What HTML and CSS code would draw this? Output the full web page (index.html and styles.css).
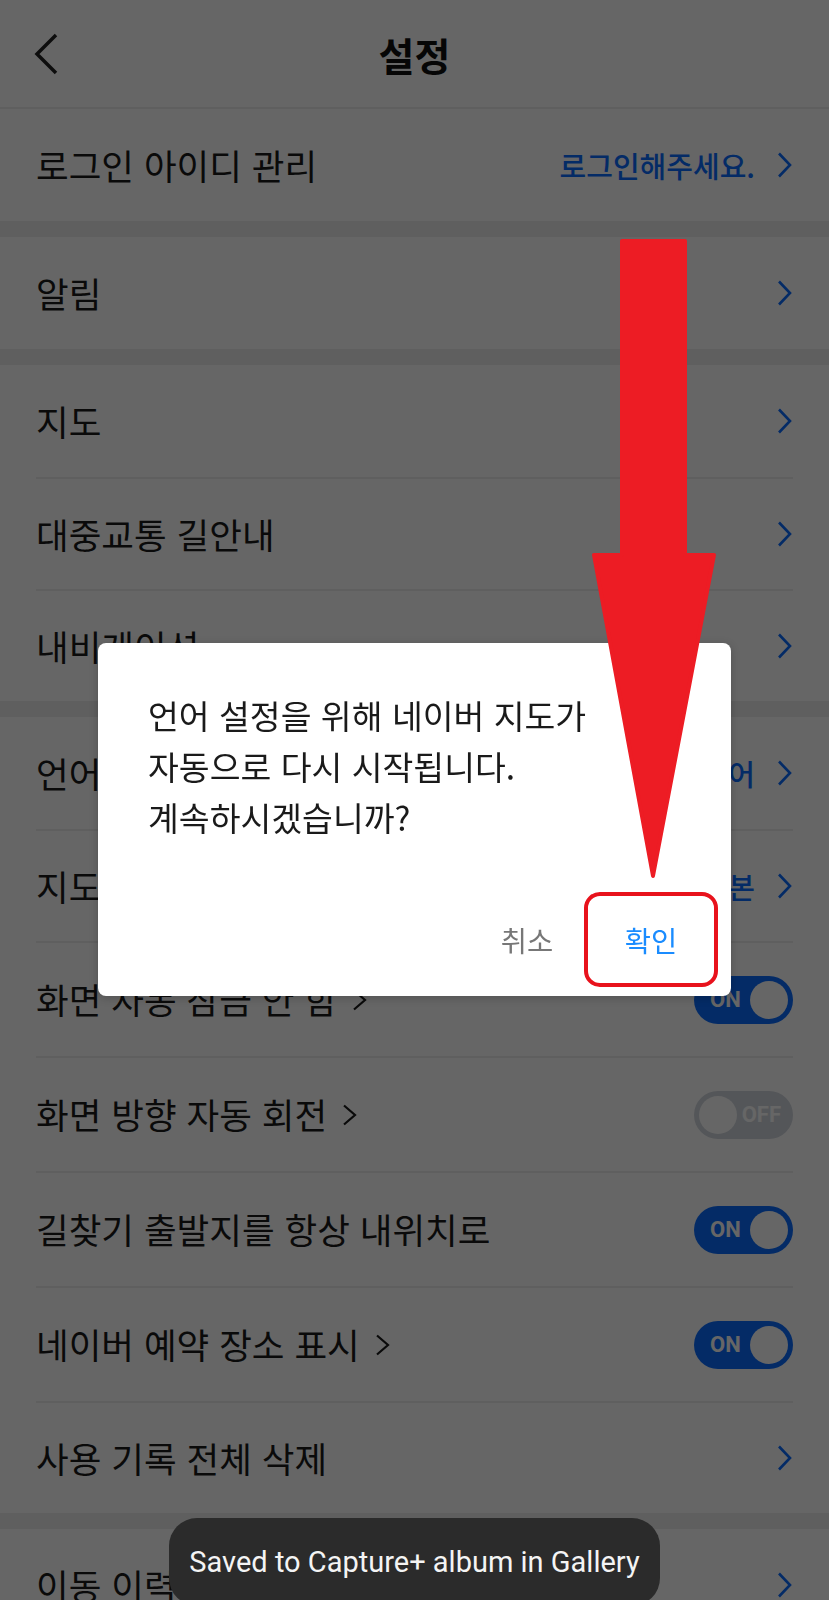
FILE: index.html
```html
<!DOCTYPE html>
<html lang="ko">
<head>
  <meta charset="UTF-8">
  <meta name="viewport" content="width=device-width, initial-scale=1.0">
  <title>설정</title>
<link rel="stylesheet" href="styles.css">
</head>
<body>
<div class="screen">
    <div class="topbar">
        <svg class="back" width="26" height="42" viewBox="0 0 26 42"><path d="M22 2 L3 21 L22 40"/></svg>
        <div class="title">설정</div>
        <div></div>
    </div>

    <div class="group">
        <div class="row">
            <span class="label">로그인 아이디 관리</span>
            <span class="value">로그인해주세요.</span>
            <svg class="chev" width="16" height="26" viewBox="0 0 16 26"><path d="M2 1.5 L13 13 L2 24.5"/></svg>
        </div>
    </div>

    <div class="group">
        <div class="row">
            <span class="label">알림</span>
            <svg class="chev" width="16" height="26" viewBox="0 0 16 26"><path d="M2 1.5 L13 13 L2 24.5"/></svg>
        </div>
    </div>

    <div class="group">
        <div class="row">
            <span class="label">지도</span>
            <svg class="chev" width="16" height="26" viewBox="0 0 16 26"><path d="M2 1.5 L13 13 L2 24.5"/></svg>
        </div>
        <div class="row">
            <span class="label">대중교통 길안내</span>
            <svg class="chev" width="16" height="26" viewBox="0 0 16 26"><path d="M2 1.5 L13 13 L2 24.5"/></svg>
        </div>
        <div class="row">
            <span class="label">내비게이션</span>
            <svg class="chev" width="16" height="26" viewBox="0 0 16 26"><path d="M2 1.5 L13 13 L2 24.5"/></svg>
        </div>
    </div>

    <div class="group">
        <div class="row">
            <span class="label">언어</span>
            <span class="value">한국어</span>
            <svg class="chev" width="16" height="26" viewBox="0 0 16 26"><path d="M2 1.5 L13 13 L2 24.5"/></svg>
        </div>
        <div class="row">
            <span class="label">지도 글자 크기</span>
            <span class="value">기본</span>
            <svg class="chev" width="16" height="26" viewBox="0 0 16 26"><path d="M2 1.5 L13 13 L2 24.5"/></svg>
        </div>
        <div class="row tall">
            <span class="label">화면 자동 잠금 안 함 <svg class="more" width="18" height="22" viewBox="0 0 18 22"><path d="M3 1.5 L14 11 L3 20.5"/></svg></span>
            <div class="toggle on"><span>ON</span><i class="knob"></i></div>
        </div>
        <div class="row tall">
            <span class="label">화면 방향 자동 회전 <svg class="more" width="18" height="22" viewBox="0 0 18 22"><path d="M3 1.5 L14 11 L3 20.5"/></svg></span>
            <div class="toggle off"><i class="knob"></i><span>OFF</span></div>
        </div>
        <div class="row tall">
            <span class="label">길찾기 출발지를 항상 내위치로</span>
            <div class="toggle on"><span>ON</span><i class="knob"></i></div>
        </div>
        <div class="row tall">
            <span class="label">네이버 예약 장소 표시 <svg class="more" width="18" height="22" viewBox="0 0 18 22"><path d="M3 1.5 L14 11 L3 20.5"/></svg></span>
            <div class="toggle on"><span>ON</span><i class="knob"></i></div>
        </div>
        <div class="row">
            <span class="label">사용 기록 전체 삭제</span>
            <svg class="chev" width="16" height="26" viewBox="0 0 16 26"><path d="M2 1.5 L13 13 L2 24.5"/></svg>
        </div>
    </div>

    <div class="group">
        <div class="row">
            <span class="label">이동 이력 관리</span>
            <svg class="chev" width="16" height="26" viewBox="0 0 16 26"><path d="M2 1.5 L13 13 L2 24.5"/></svg>
        </div>
    </div>
</div>

<div class="dim"></div>

<div class="dialog">
    <p class="message">언어 설정을 위해 네이버 지도가<br>자동으로 다시 시작됩니다.<br>계속하시겠습니까?</p>
    <div class="actions">
        <button class="btn cancel">취소</button>
        <button class="btn ok">확인</button>
    </div>
</div>

<!-- annotation arrow -->
<svg class="arrow" width="130" height="645" viewBox="0 0 130 645">
    <path d="M32 3 H95 V317 H124 L63 638 L4 317 H32 Z"/>
</svg>

<div class="toast">Saved to Capture+ album in Gallery</div>
</body></html>
```

FILE: styles.css
```css
html, body {
    margin: 0;
    height: 100%;
    overflow: hidden;
}
body {
    font-family: "Noto Sans CJK KR", sans-serif;
    background-color: #fff;
    color: #1a1a1a;
}
.screen {
    background-color: #eeeeee;
}
.topbar {
    display: grid;
    grid-template-columns: 1fr auto 1fr;
    align-items: center;
    height: 109px;
    box-sizing: border-box;
    padding: 0 34px;
    background-color: #fff;
    border-bottom: 2px solid #eeeeee;
}
.back path {
    fill: none;
    stroke: #222;
    stroke-width: 3.5;
}
.title {
    font-size: 39px;
    font-weight: bold;
    color: #111;
}
.group {
    background-color: #fff;
    padding: 0 36px;
}
.group + .group {
    margin-top: 16px;
}
.row {
    display: flex;
    align-items: center;
    height: 112px;
    box-sizing: border-box;
}
.row.tall {
    height: 115px;
}
.row + .row {
    border-top: 2px solid #eeeeee;
}
.label {
    flex: 1;
    font-size: 35.5px;
    line-height: 1.2;
    display: flex;
    align-items: center;
}
.more {
    margin-left: 14px;
}
.more path {
    fill: none;
    stroke: #1a1a1a;
    stroke-width: 2.2;
}
.value {
    font-size: 29px;
    font-weight: 500;
    color: #0a6cff;
    margin-right: 22px;
}
.chev path {
    fill: none;
    stroke: #0a6cff;
    stroke-width: 2.6;
}
.toggle {
    display: flex;
    align-items: center;
    justify-content: space-between;
    width: 99px;
    height: 48px;
    box-sizing: border-box;
    border-radius: 24px;
    font-family: Roboto, sans-serif;
    font-weight: bold;
    font-size: 22px;
    color: #fff;
}
.toggle.on {
    background-color: #0a6cff;
    padding: 0 5px 0 16px;
}
.toggle.off {
    background-color: #d2d7de;
    padding: 0 12px 0 5px;
}
.knob {
    width: 38px;
    height: 38px;
    border-radius: 50%;
    background-color: #fff;
}
.dim {
    position: fixed;
    top: 0;
    left: 0;
    right: 0;
    bottom: 0;
    background-color: rgba(0,0,0,0.6);
    z-index: 1;
}
.dialog {
    position: absolute;
    top: 643px;
    left: 98px;
    width: 633px;
    height: 353px;
    box-sizing: border-box;
    display: flex;
    flex-direction: column;
    background-color: #fff;
    border-radius: 8px;
    box-shadow: 0 2px 10px rgba(0,0,0,0.2);
    z-index: 2;
}
.message {
    margin: 0;
    padding: 46px 48px 0 50px;
    font-size: 33.5px;
    line-height: 51px;
    color: #1a1a1a;
}
.actions {
    margin-top: auto;
    display: flex;
    justify-content: flex-end;
    align-items: center;
    gap: 17px;
    padding: 0 13px 9px 0;
}
.btn {
    font-family: "Noto Sans CJK KR", sans-serif;
    font-size: 28.5px;
    background: none;
    border: none;
    padding: 0;
    cursor: pointer;
}
.cancel {
    width: 80px;
    color: #777;
}
.ok {
    width: 134px;
    height: 95px;
    color: #1a8cff;
    border: 4px solid #e8121c;
    border-radius: 16px;
}
.arrow {
    position: absolute;
    top: 238px;
    left: 590px;
    z-index: 3;
}
.arrow path {
    fill: #ed1c24;
    stroke: #ed1c24;
    stroke-width: 4;
    stroke-linejoin: round;
}
.toast {
    position: absolute;
    top: 1518px;
    left: 169px;
    width: 491px;
    height: 88px;
    display: flex;
    align-items: center;
    justify-content: center;
    background-color: #2b2b2b;
    border-radius: 28px;
    color: #f4f4f4;
    font-family: Roboto, sans-serif;
    font-size: 29px;
    z-index: 2;
}
```
